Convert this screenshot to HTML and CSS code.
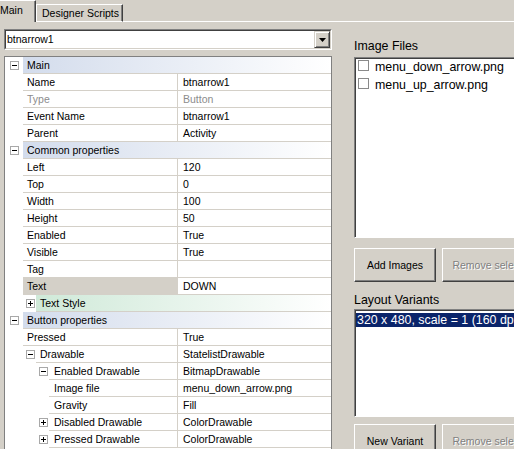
FILE: index.html
```html
<!DOCTYPE html>
<html lang="en">
<head>
    <meta charset="UTF-8">
    <title>Designer</title>
    <link rel="stylesheet" href="styles.css">
</head>
<body>
    <div class="tabbar">
        <div class="tab on">Main</div>
        <div class="tab">Designer Scripts</div>
        <div class="tab-fill"></div>
    </div>

    <div class="page">
        <div class="left">
            <div class="combo">
                <div class="combo-in">
                    <span class="combo-text">btnarrow1</span>
                    <span class="combo-btn">
                        <svg width="7" height="4" viewBox="0 0 7 4"><path d="M0 0h7L3.5 4z" fill="#000"/></svg>
                    </span>
                </div>
            </div>

            <div class="grid">
                <div class="row cat">
                    <span class="tog"><svg width="9" height="9" viewBox="0 0 9 9"><rect x="0.5" y="0.5" width="8" height="8" fill="#fff" stroke="#a8a8a8"/><path d="M2 4.5h5" stroke="#000"/></svg></span>
                    <span class="head">Main</span>
                </div>
                <div class="row"><span class="tog"></span><span class="key">Name</span><span class="val">btnarrow1</span></div>
                <div class="row dim"><span class="tog"></span><span class="key">Type</span><span class="val">Button</span></div>
                <div class="row"><span class="tog"></span><span class="key">Event Name</span><span class="val">btnarrow1</span></div>
                <div class="row"><span class="tog"></span><span class="key">Parent</span><span class="val">Activity</span></div>

                <div class="row cat">
                    <span class="tog"><svg width="9" height="9" viewBox="0 0 9 9"><rect x="0.5" y="0.5" width="8" height="8" fill="#fff" stroke="#a8a8a8"/><path d="M2 4.5h5" stroke="#000"/></svg></span>
                    <span class="head">Common properties</span>
                </div>
                <div class="row"><span class="tog"></span><span class="key">Left</span><span class="val">120</span></div>
                <div class="row"><span class="tog"></span><span class="key">Top</span><span class="val">0</span></div>
                <div class="row"><span class="tog"></span><span class="key">Width</span><span class="val">100</span></div>
                <div class="row"><span class="tog"></span><span class="key">Height</span><span class="val">50</span></div>
                <div class="row"><span class="tog"></span><span class="key">Enabled</span><span class="val">True</span></div>
                <div class="row"><span class="tog"></span><span class="key">Visible</span><span class="val">True</span></div>
                <div class="row"><span class="tog"></span><span class="key">Tag</span><span class="val"></span></div>
                <div class="row"><span class="tog"></span><span class="key sel">Text</span><span class="val">DOWN</span></div>
                <div class="row lv1">
                    <span class="tog"><svg width="9" height="9" viewBox="0 0 9 9"><rect x="0.5" y="0.5" width="8" height="8" fill="#fff" stroke="#a8a8a8"/><path d="M2 4.5h5M4.5 2v5" stroke="#000"/></svg></span>
                    <span class="group">Text Style</span>
                </div>

                <div class="row cat">
                    <span class="tog"><svg width="9" height="9" viewBox="0 0 9 9"><rect x="0.5" y="0.5" width="8" height="8" fill="#fff" stroke="#a8a8a8"/><path d="M2 4.5h5" stroke="#000"/></svg></span>
                    <span class="head">Button properties</span>
                </div>
                <div class="row"><span class="tog"></span><span class="key">Pressed</span><span class="val">True</span></div>
                <div class="row lv1">
                    <span class="tog"><svg width="9" height="9" viewBox="0 0 9 9"><rect x="0.5" y="0.5" width="8" height="8" fill="#fff" stroke="#a8a8a8"/><path d="M2 4.5h5" stroke="#000"/></svg></span>
                    <span class="key">Drawable</span><span class="val">StatelistDrawable</span>
                </div>
                <div class="row lv2">
                    <span class="tog"><svg width="9" height="9" viewBox="0 0 9 9"><rect x="0.5" y="0.5" width="8" height="8" fill="#fff" stroke="#a8a8a8"/><path d="M2 4.5h5" stroke="#000"/></svg></span>
                    <span class="key">Enabled Drawable</span><span class="val">BitmapDrawable</span>
                </div>
                <div class="row lv3"><span class="tog"></span><span class="key">Image file</span><span class="val">menu_down_arrow.png</span></div>
                <div class="row lv3"><span class="tog"></span><span class="key">Gravity</span><span class="val">Fill</span></div>
                <div class="row lv2">
                    <span class="tog"><svg width="9" height="9" viewBox="0 0 9 9"><rect x="0.5" y="0.5" width="8" height="8" fill="#fff" stroke="#a8a8a8"/><path d="M2 4.5h5M4.5 2v5" stroke="#000"/></svg></span>
                    <span class="key">Disabled Drawable</span><span class="val">ColorDrawable</span>
                </div>
                <div class="row lv2">
                    <span class="tog"><svg width="9" height="9" viewBox="0 0 9 9"><rect x="0.5" y="0.5" width="8" height="8" fill="#fff" stroke="#a8a8a8"/><path d="M2 4.5h5M4.5 2v5" stroke="#000"/></svg></span>
                    <span class="key">Pressed Drawable</span><span class="val">ColorDrawable</span>
                </div>
            </div>
        </div>

        <div class="right">
            <div class="label">Image Files</div>
            <div class="listbox files">
                <div class="item"><span class="check"></span>menu_down_arrow.png</div>
                <div class="item"><span class="check"></span>menu_up_arrow.png</div>
            </div>
            <div class="buttons">
                <button class="btn">Add Images</button>
                <button class="btn wide" disabled>Remove selected</button>
            </div>

            <div class="label variants-label">Layout Variants</div>
            <div class="listbox variants">
                <div class="variant sel">320 x 480, scale = 1 (160 dpi)</div>
            </div>
            <div class="buttons last">
                <button class="btn">New Variant</button>
                <button class="btn wide" disabled>Remove selected</button>
            </div>
        </div>
    </div>
</body>
</html>
```

FILE: styles.css
```css
body {
    margin: 0;
    width: 514px;
    height: 449px;
    overflow: hidden;
    background: #d4d0c8;
    font-family: "Liberation Sans", Arial, sans-serif;
    font-size: 10.5px;
    color: #000;
}

/* tab strip */
.tabbar {
    display: flex;
    align-items: flex-end;
    height: 22px;
}
.tab {
    box-sizing: border-box;
    width: 87px;
    height: 18px;
    padding: 2px 0 0 5px;
    line-height: 13px;
    white-space: nowrap;
    border-top: 1px solid #fff;
    border-left: 1px solid #fff;
    border-right: 1px solid #404040;
    border-bottom: 1px solid #fff;
    box-shadow: inset -1px 0 #808080;
}
.tab.on {
    width: 36px;
    height: 22px;
    padding: 3px 0 0 0;
    border-left: none;
    border-bottom: none;
}
.tab-fill {
    flex: 1;
    border-bottom: 1px solid #fff;
}

.page {
    display: flex;
}
.left {
    flex: none;
    width: 328px;
    padding: 7px 0 0 4px;
}

/* combo box */
.combo {
    box-sizing: border-box;
    height: 21px;
    border: 1px solid;
    border-color: #808080 #fff #fff #808080;
}
.combo-in {
    box-sizing: border-box;
    height: 100%;
    display: flex;
    background: #fff;
    border: 1px solid;
    border-color: #404040 #d4d0c8 #d4d0c8 #404040;
}
.combo-text {
    flex: 1;
    padding-left: 1px;
    line-height: 17px;
}
.combo-btn {
    box-sizing: border-box;
    width: 16px;
    display: flex;
    align-items: center;
    justify-content: center;
    background: #d4d0c8;
    border: 1px solid;
    border-color: #d4d0c8 #404040 #404040 #d4d0c8;
    box-shadow: inset 1px 1px #fff, inset -1px -1px #808080;
}

/* property grid */
.grid {
    margin-top: 6px;
    height: 400px;
    overflow: hidden;
    background: #fff;
    border: 1px solid #808080;
}
.row {
    display: flex;
    height: 17px;
    white-space: nowrap;
}
.tog {
    flex: none;
    box-sizing: border-box;
    width: 18px;
    display: flex;
    align-items: center;
    justify-content: center;
}
.lv1 .tog, .lv2 .tog {
    justify-content: flex-end;
    padding-right: 1px;
}
.lv1 .tog { width: 31px; }
.lv2 .tog { width: 44px; }
.lv3 .tog { width: 44px; }
.key {
    flex: none;
    box-sizing: border-box;
    width: 154px;
    padding-left: 4px;
    line-height: 16px;
    border-bottom: 1px solid #d4d0c8;
}
.lv1 .key { width: 141px; }
.lv2 .key, .lv3 .key { width: 128px; padding-left: 5px; }
.key.sel {
    background: #d4d0c8;
}
.val {
    flex: 1;
    padding-left: 5px;
    line-height: 16px;
    border-left: 1px solid #d4d0c8;
    border-bottom: 1px solid #d4d0c8;
}
.dim .key, .dim .val {
    color: #8c8c8c;
}
.head {
    flex: 1;
    padding-left: 4px;
    line-height: 16px;
    background: linear-gradient(to right, #d3dcec, #fff);
    border-bottom: 1px solid #d4d0c8;
}
.group {
    flex: 1;
    padding-left: 4px;
    line-height: 16px;
    background: linear-gradient(to right, #cfe9d8, #fff);
    border-bottom: 1px solid #d4d0c8;
}

/* right side panel */
.right {
    flex: none;
    width: 220px;
    margin-left: 22px;
    padding-top: 17px;
}
.label {
    font-size: 12.4px;
    line-height: 15px;
    margin-bottom: 3px;
}
.variants-label {
    margin-top: 11px;
    margin-bottom: 1px;
}
.listbox {
    box-sizing: border-box;
    padding: 1px;
    background: #fff;
    border: 1px solid;
    border-color: #808080 #fff #fff #808080;
    box-shadow: inset 1px 1px #404040;
}
.files { height: 181px; }
.variants { height: 108px; }
.item {
    display: flex;
    height: 18px;
    font-size: 12.4px;
    line-height: 16px;
}
.check {
    flex: none;
    box-sizing: border-box;
    width: 11px;
    height: 11px;
    margin: 1px 6px 0 2px;
    border: 1px solid #8a8a8a;
    background: #fff;
}
.variant {
    margin-top: 2px;
    padding-left: 1px;
    font-size: 12.4px;
    line-height: 14px;
    white-space: nowrap;
}
.variant.sel {
    background: #0a246a;
    color: #fff;
}
.buttons {
    display: flex;
    gap: 6px;
    margin-top: 10px;
}
.buttons.last { margin-top: 7px; }
.btn {
    flex: none;
    box-sizing: border-box;
    width: 82px;
    height: 34px;
    padding: 0;
    font: inherit;
    color: #000;
    white-space: nowrap;
    overflow: hidden;
    background: #d4d0c8;
    border: 1px solid;
    border-color: #fff #404040 #404040 #fff;
    box-shadow: inset -1px -1px #808080;
}
.btn.wide { width: 102px; }
.btn:disabled {
    color: #808080;
    text-shadow: 1px 1px #fff;
}
```
